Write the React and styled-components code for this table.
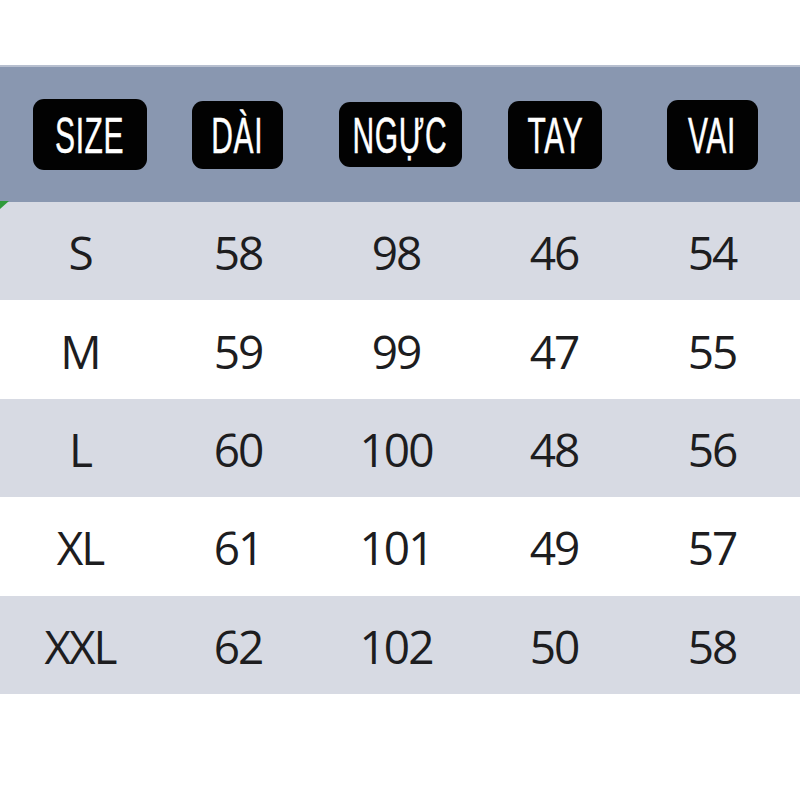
import React from "react"
import styled, { createGlobalStyle } from "styled-components"

const headers = [
  { label: "SIZE", w: 114, h: 71, shift: 10 },
  { label: "DÀI", w: 91, h: 68, shift: -1 },
  { label: "NGỰC", w: 123, h: 65, shift: 4 },
  { label: "TAY", w: 94, h: 68, shift: 1 },
  { label: "VAI", w: 91, h: 70, shift: 0 },
]

const rows = [
  ["S", 58, 98, 46, 54],
  ["M", 59, 99, 47, 55],
  ["L", 60, 100, 48, 56],
  ["XL", 61, 101, 49, 57],
  ["XXL", 62, 102, 50, 58],
]

export default function App() {
  return (
    <Page>
      <GlobalStyle />
      <Table>
        <HeaderRow>
          {headers.map((h) => (
            <Cell key={h.label}>
              <Badge $w={h.w} $h={h.h} $shift={h.shift}>
                <BadgeText>{h.label}</BadgeText>
              </Badge>
            </Cell>
          ))}
        </HeaderRow>
        {rows.map((r, i) => (
          <Row key={r[0]} $shaded={i % 2 === 0} $first={i === 0}>
            {r.map((v, j) => (
              <Value key={j}>{v}</Value>
            ))}
          </Row>
        ))}
      </Table>
    </Page>
  )
}

const GlobalStyle = createGlobalStyle`
  body {
    margin: 0;
    background: #ffffff;
  }
`

const Page = styled.div`
  width: 800px;
  height: 800px;
  padding-top: 65px;
  box-sizing: border-box;
  background: #ffffff;
`

const Table = styled.div`
  display: flex;
  flex-direction: column;
`

const columns = `160px 156px 160px 156px 160px`

const HeaderRow = styled.div`
  display: grid;
  grid-template-columns: ${columns};
  height: 137px;
  background: #8997b0;
  border-top: 2px solid #b7bfcf;
  box-sizing: border-box;
`

const Cell = styled.div`
  display: flex;
  align-items: center;
  justify-content: center;
`

const Badge = styled.div`
  width: ${(p) => p.$w}px;
  height: ${(p) => p.$h}px;
  margin-left: ${(p) => p.$shift * 2}px;
  background: #020202;
  border-radius: 11px;
  display: flex;
  align-items: center;
  justify-content: center;
  overflow: hidden;
`

const BadgeText = styled.span`
  display: inline-block;
  font-family: "Liberation Sans", "DejaVu Sans", sans-serif;
  font-weight: 400;
  font-size: 50px;
  line-height: 1;
  color: #ffffff;
  -webkit-text-stroke: 0.5px #ffffff;
  letter-spacing: 1px;
  transform: scaleX(0.6);
  white-space: nowrap;
  padding-top: 3px;
`

const Row = styled.div`
  position: relative;
  display: grid;
  grid-template-columns: ${columns};
  height: 98.4px;
  background: ${(p) => (p.$shaded ? "#d7dae3" : "#ffffff")};
  align-items: center;

  &::before {
    content: "";
    display: ${(p) => (p.$first ? "block" : "none")};
    position: absolute;
    left: 0;
    top: -1px;
    border-top: 8px solid #2f9a3a;
    border-right: 9px solid transparent;
  }
`

const Value = styled.div`
  text-align: center;
  font-family: "Open Sans", "Noto Sans", sans-serif;
  font-size: 46px;
  letter-spacing: -2px;
  color: #1d1d1f;
  line-height: 1;
  padding-top: 2px;
`
